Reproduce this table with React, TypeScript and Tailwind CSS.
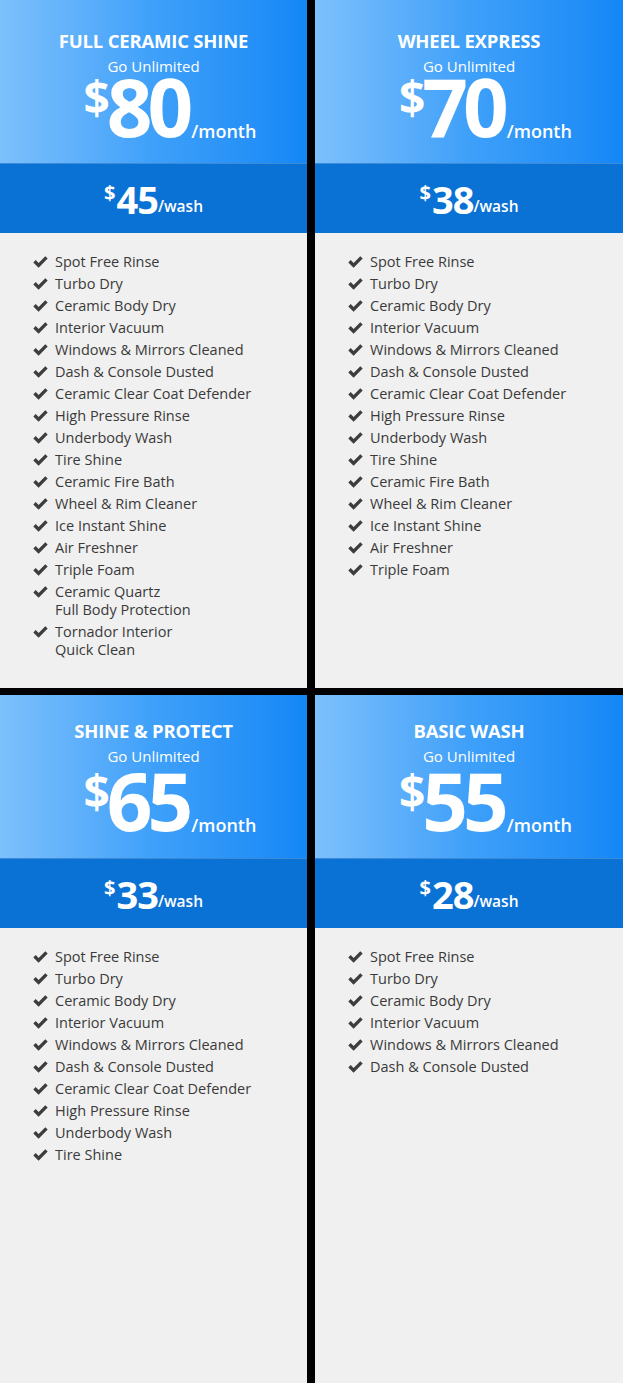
import React from "react";

type Plan = {
  title: string;
  month: string;
  wash: string;
  features: string[][];
  row: 1 | 2;
};

const all: string[][] = [
  ["Spot Free Rinse"],
  ["Turbo Dry"],
  ["Ceramic Body Dry"],
  ["Interior Vacuum"],
  ["Windows & Mirrors Cleaned"],
  ["Dash & Console Dusted"],
  ["Ceramic Clear Coat Defender"],
  ["High Pressure Rinse"],
  ["Underbody Wash"],
  ["Tire Shine"],
  ["Ceramic Fire Bath"],
  ["Wheel & Rim Cleaner"],
  ["Ice Instant Shine"],
  ["Air Freshner"],
  ["Triple Foam"],
  ["Ceramic Quartz", "Full Body Protection"],
  ["Tornador Interior", "Quick Clean"],
];

const plans: Plan[] = [
  { title: "FULL CERAMIC SHINE", month: "80", wash: "45", features: all, row: 1 },
  { title: "WHEEL EXPRESS", month: "70", wash: "38", features: all.slice(0, 15), row: 1 },
  { title: "SHINE & PROTECT", month: "65", wash: "33", features: all.slice(0, 10), row: 2 },
  { title: "BASIC WASH", month: "55", wash: "28", features: all.slice(0, 6), row: 2 },
];

function Check() {
  return (
    <svg width="15" height="12" viewBox="0 0 15 12" className="shrink-0 mt-[3px]">
      <path d="M0.3 6.4 L2.7 4.0 L5.6 6.9 L12.3 0.2 L14.7 2.6 L5.6 11.7 Z" fill="#3d3d3d" />
    </svg>
  );
}

function Card({ p }: { p: Plan }) {
  return (
    <div className="flex flex-col h-[688px] bg-[#f0f0f0]">
      <div
        className={`h-[163px] shrink-0 bg-gradient-to-r from-[#7cc0fc] via-[#3ea0f9] to-[#1287f6] flex flex-col items-center text-white ${
          p.row === 1 ? "pt-[31px]" : "pt-[26px]"
        }`}
      >
        <div className="text-[18.5px] font-bold leading-[20px] tracking-[-0.2px]">{p.title}</div>
        <div className="text-[15px] leading-[18px] mt-[6px]">Go Unlimited</div>
        <div className={`relative mr-[12px] ${p.row === 1 ? "mt-[2px]" : "mt-[6px]"}`}>
          <span className="absolute right-full top-[2px] text-[46px] font-bold leading-[36px] mr-[-3px]">$</span>
          <span className="block text-[80px] font-bold leading-[58px] tracking-[-5px]">{p.month}</span>
          <span className="absolute left-full bottom-[-5px] ml-[3px] text-[18px] font-semibold leading-none">/month</span>
        </div>
      </div>
      <div className="h-[70px] shrink-0 border-t border-[#3d8ad6] bg-[#0a72d4] flex items-center justify-center text-white">
        <div className="flex items-end">
          <span className="self-start text-[20px] font-bold leading-none mt-[1px] mr-[1px]">$</span>
          <span className="text-[38px] font-bold leading-[34px] tracking-[-1px]">{p.wash}</span>
          <span className="text-[15.5px] font-semibold leading-none mb-[1px]">/wash</span>
        </div>
      </div>
      <div className="flex-1 pl-[33px] pt-[20px]">
        <ul className="flex flex-col gap-[4px]">
          {p.features.map((f, i) => (
            <li key={i} className="flex gap-[7px] text-[14.5px] leading-[18px] text-[#3a3a3a]">
              <Check />
              <div>
                {f.map((l, j) => (
                  <div key={j}>{l}</div>
                ))}
              </div>
            </li>
          ))}
        </ul>
      </div>
    </div>
  );
}

export default function App() {
  return (
    <div
      className="w-[623px] h-[1383px] bg-black grid grid-cols-[307px_308px] grid-rows-[688px_688px] gap-x-[8px] gap-y-[7px]"
      style={{ fontFamily: '"Open Sans", "Noto Sans", sans-serif' }}
    >
      {plans.map((p, i) => (
        <Card key={i} p={p} />
      ))}
    </div>
  );
}
